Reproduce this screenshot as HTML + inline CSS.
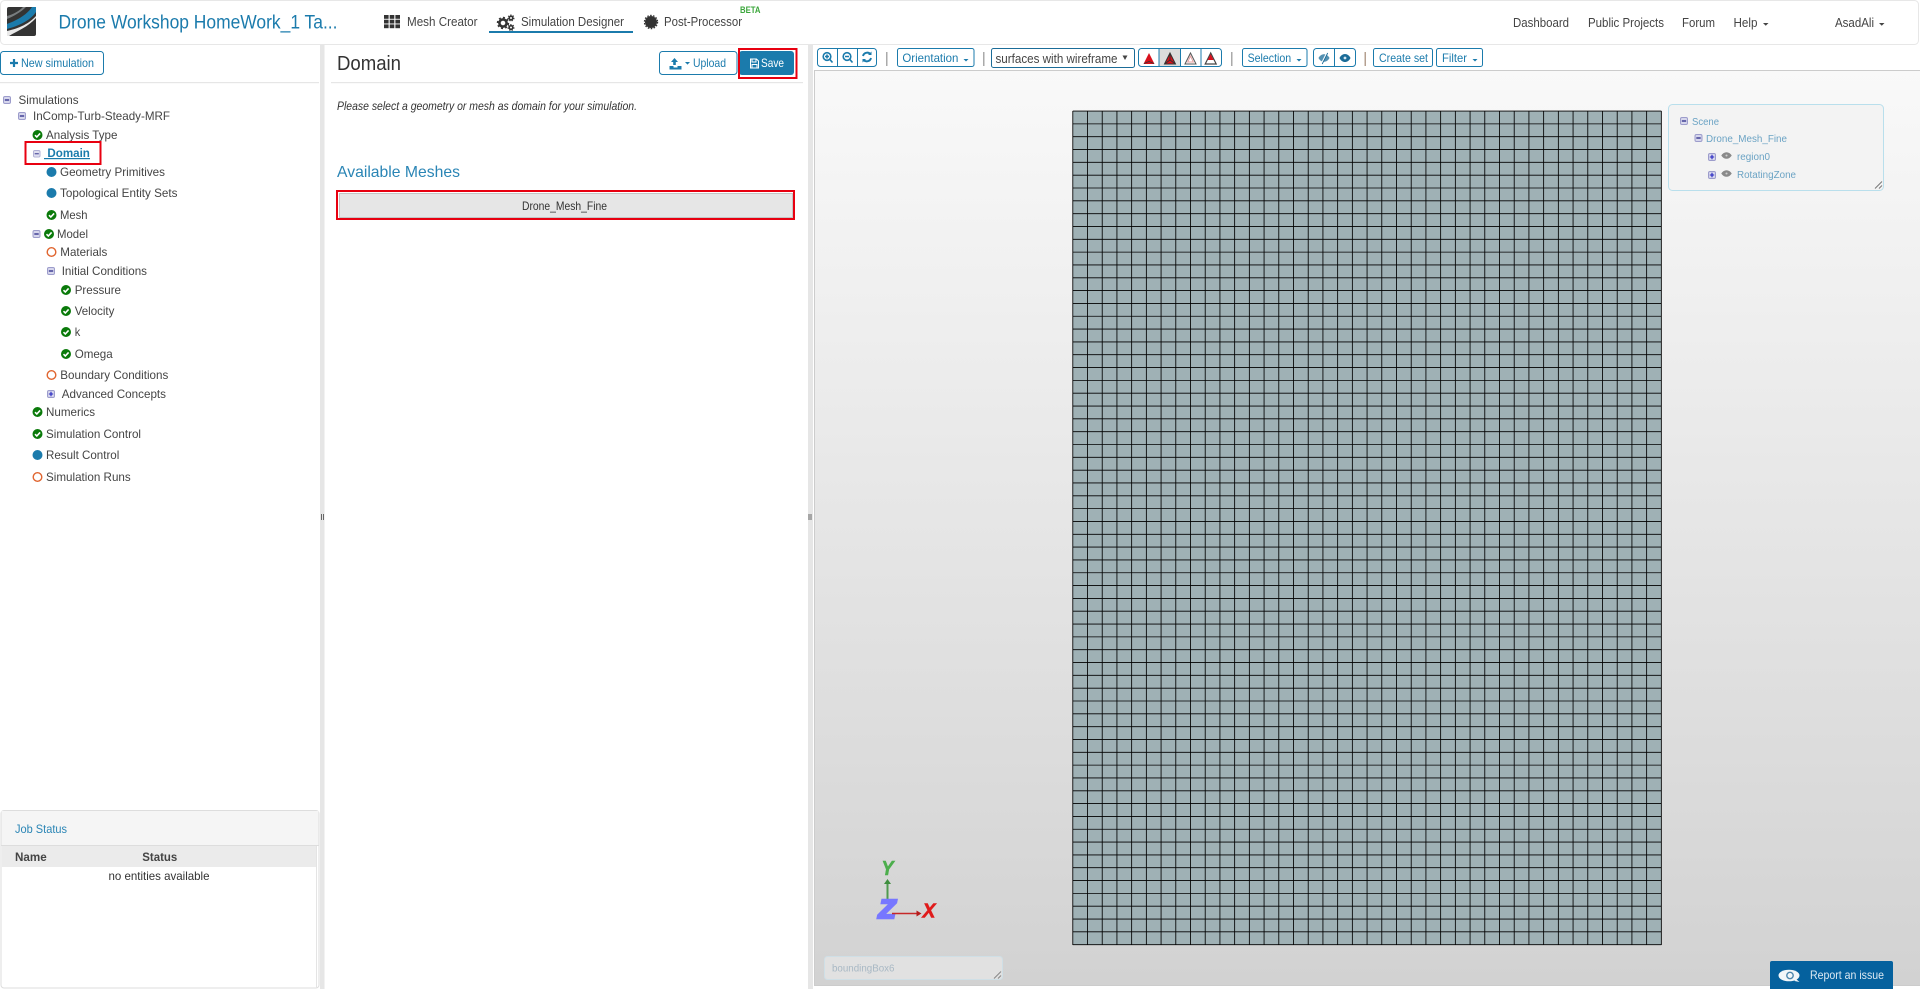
<!DOCTYPE html>
<html><head><meta charset="utf-8"><title>Domain</title>
<style>
html,body{margin:0;padding:0;background:#fff;width:1920px;height:989px;overflow:hidden}
svg{display:block;font-family:"Liberation Sans",sans-serif}
.b{fill:#1b7bac}.n{font-size:13px;fill:#444}.t{font-size:12px;fill:#444}.tb{font-size:12px;fill:#1b7bac}
.s{font-size:10px;fill:#6ba3c4}
.btn{fill:#fff;stroke:#1b7bac;stroke-width:1}
.sep{fill:#aaa}
</style></head><body>
<svg xmlns="http://www.w3.org/2000/svg" width="1920" height="989" viewBox="0 0 1920 989">
<defs>
<linearGradient id="g" x1="0" y1="0" x2="0" y2="1"><stop offset="0" stop-color="#f9f9f9"/><stop offset="1" stop-color="#d2d2d2"/></linearGradient>
<symbol id="c" viewBox="0 0 10 10"><circle cx="5" cy="5" r="5" fill="#0a7a0a"/><path d="M2.5 5.2L4.3 7L7.6 3.4" fill="none" stroke="#fff" stroke-width="1.6"/></symbol>
<symbol id="d" viewBox="0 0 10 10"><circle cx="5" cy="5" r="5" fill="#1b7bac"/></symbol>
<symbol id="o" viewBox="0 0 10 10"><circle cx="5" cy="5" r="4.3" fill="#fff" stroke="#e0652f" stroke-width="1.4"/></symbol>
<symbol id="m" viewBox="0 0 8 8"><rect x=".5" y=".5" width="7" height="7" rx="1.5" fill="#d6d6ec" stroke="#9c9ccb"/><path d="M1.8 4H6.2" stroke="#1c1c80" stroke-width="1.2"/></symbol>
<symbol id="p" viewBox="0 0 8 8"><rect x=".5" y=".5" width="7" height="7" rx="1.5" fill="#d6d6ec" stroke="#9c9ccb"/><path d="M1.8 4H6.2M4 1.8V6.2" stroke="#2222c0" stroke-width="1.1"/></symbol>
<symbol id="e" viewBox="0 0 12 8"><path d="M0 4C3-1 9-1 12 4C9 9 3 9 0 4Z" fill="#8a8a8a"/><circle cx="6" cy="4" r="1.2" fill="#cfcfcf"/></symbol>
</defs>

<!-- navbar -->
<rect x=".5" y=".5" width="1918" height="44" rx="4" fill="#fff" stroke="#e7e7e7"/>
<rect x="7" y="7" width="29" height="29" rx="2" fill="#343434"/>
<path d="M7 24C15 21 26 16 32 7H36V12C30 21 18 26 7 29Z" fill="#1b7bac"/>
<path d="M7 31C16 29 28 25 36 16V18C28 27 17 31 9 36H7Z" fill="#e9e9e9"/>
<path d="M7 19C14 16 21 12 26 7H23C19 11 14 14 7 16Z" fill="#cfd8dc" opacity=".45"/>
<text x="58.5" y="28.5" font-size="19" class="b" textLength="279" lengthAdjust="spacingAndGlyphs">Drone Workshop HomeWork_1 Ta...</text>
<g fill="#333"><rect x="384" y="15" width="4.6" height="3.8"/><rect x="389.7" y="15" width="4.6" height="3.8"/><rect x="395.4" y="15" width="4.6" height="3.8"/><rect x="384" y="19.7" width="4.6" height="3.8"/><rect x="389.7" y="19.7" width="4.6" height="3.8"/><rect x="395.4" y="19.7" width="4.6" height="3.8"/><rect x="384" y="24.4" width="4.6" height="3.8"/><rect x="389.7" y="24.4" width="4.6" height="3.8"/><rect x="395.4" y="24.4" width="4.6" height="3.8"/></g>
<text x="407" y="26" class="n" textLength="70.5" lengthAdjust="spacingAndGlyphs">Mesh Creator</text>
<g fill="none" stroke="#333"><circle cx="503" cy="23" r="3.6" stroke-width="2.6"/><circle cx="503" cy="23" r="5.4" stroke-width="1.6" stroke-dasharray="2 2.2"/><circle cx="511" cy="18" r="1.8" stroke-width="1.6"/><circle cx="511" cy="18" r="3" stroke-width="1" stroke-dasharray="1.3 1.3"/><circle cx="511" cy="27.5" r="1.8" stroke-width="1.6"/><circle cx="511" cy="27.5" r="3" stroke-width="1" stroke-dasharray="1.3 1.3"/></g>
<text x="521" y="26" class="n" textLength="103" lengthAdjust="spacingAndGlyphs">Simulation Designer</text>
<rect x="489" y="31" width="144" height="2" fill="#1b7bac"/>
<circle cx="651" cy="22" r="6" fill="#333"/><circle cx="651" cy="22" r="6.6" fill="none" stroke="#333" stroke-width="1.2" stroke-dasharray="1.6 1.4"/>
<text x="664" y="26" class="n" textLength="78" lengthAdjust="spacingAndGlyphs">Post-Processor</text>
<text x="740" y="13" font-size="9" font-weight="bold" fill="#3aa63a" textLength="20.5" lengthAdjust="spacingAndGlyphs">BETA</text>
<text x="1513" y="27" class="n" textLength="56" lengthAdjust="spacingAndGlyphs">Dashboard</text>
<text x="1588" y="27" class="n" textLength="76" lengthAdjust="spacingAndGlyphs">Public Projects</text>
<text x="1682" y="27" class="n" textLength="33" lengthAdjust="spacingAndGlyphs">Forum</text>
<text x="1733.5" y="27" class="n" textLength="24" lengthAdjust="spacingAndGlyphs">Help</text>
<path d="M1763 23h5.5l-2.75 2.8z" fill="#444"/>
<text x="1835" y="27" class="n" textLength="39" lengthAdjust="spacingAndGlyphs">AsadAli</text>
<path d="M1879 23h5.5l-2.75 2.8z" fill="#444"/>

<!-- splitters -->
<rect x="320" y="45" width="4.5" height="944" fill="#e6e6e6"/>
<rect x="808" y="45" width="5" height="944" fill="#e6e6e6"/>
<path d="M321.5 514v6M323.5 514v6M809 514v6M811 514v6" stroke="#666" stroke-width="1"/>

<!-- left panel -->
<rect x=".5" y="51.5" width="103" height="23" rx="3" class="btn"/>
<path d="M10 63h8M14 59v8" stroke="#1b7bac" stroke-width="2.2"/>
<text x="21" y="67" class="tb" textLength="73" lengthAdjust="spacingAndGlyphs">New simulation</text>
<rect x="0" y="82" width="319" height="1.2" fill="#e6e6e6"/>

<use href="#m" x="3" y="96" width="8" height="8"/><text x="18.5" y="104" class="t" textLength="60" lengthAdjust="spacingAndGlyphs">Simulations</text>
<use href="#m" x="18" y="112" width="8" height="8"/><text x="33" y="120" class="t" textLength="137" lengthAdjust="spacingAndGlyphs">InComp-Turb-Steady-MRF</text>
<use href="#c" x="32.5" y="130" width="10" height="10"/><text x="46" y="139" class="t" textLength="71.5" lengthAdjust="spacingAndGlyphs">Analysis Type</text>
<use href="#m" x="33" y="150" width="7.5" height="7.5" opacity=".8"/><text x="47.4" y="157" font-size="12" font-weight="bold" fill="#1b7bac" textLength="42.5" lengthAdjust="spacingAndGlyphs">Domain</text>
<rect x="44" y="158" width="46" height="1.2" fill="#1b7bac"/>
<rect x="25.5" y="142" width="75" height="22" fill="none" stroke="#e80010" stroke-width="2"/>
<use href="#d" x="46.5" y="167" width="10" height="10"/><text x="60" y="176" class="t" textLength="105" lengthAdjust="spacingAndGlyphs">Geometry Primitives</text>
<use href="#d" x="46.5" y="188" width="10" height="10"/><text x="60" y="197" class="t" textLength="117.5" lengthAdjust="spacingAndGlyphs">Topological Entity Sets</text>
<use href="#c" x="46.5" y="210" width="10" height="10"/><text x="60" y="219" class="t" textLength="27.5" lengthAdjust="spacingAndGlyphs">Mesh</text>
<use href="#m" x="32.5" y="230" width="8" height="8"/><use href="#c" x="44" y="229" width="10" height="10"/><text x="57" y="238" class="t" textLength="31" lengthAdjust="spacingAndGlyphs">Model</text>
<use href="#o" x="46.5" y="247" width="10" height="10"/><text x="60.3" y="256" class="t" textLength="47" lengthAdjust="spacingAndGlyphs">Materials</text>
<use href="#m" x="47" y="267" width="8" height="8"/><text x="61.7" y="275" class="t" textLength="85.3" lengthAdjust="spacingAndGlyphs">Initial Conditions</text>
<use href="#c" x="61" y="285" width="10" height="10"/><text x="74.7" y="294" class="t" textLength="46.3" lengthAdjust="spacingAndGlyphs">Pressure</text>
<use href="#c" x="61" y="306" width="10" height="10"/><text x="74.7" y="315" class="t" textLength="39.7" lengthAdjust="spacingAndGlyphs">Velocity</text>
<use href="#c" x="61" y="327" width="10" height="10"/><text x="74.7" y="336" class="t" textLength="5.5" lengthAdjust="spacingAndGlyphs">k</text>
<use href="#c" x="61" y="349" width="10" height="10"/><text x="74.7" y="358" class="t" textLength="38" lengthAdjust="spacingAndGlyphs">Omega</text>
<use href="#o" x="46.5" y="370" width="10" height="10"/><text x="60.3" y="379" class="t" textLength="108" lengthAdjust="spacingAndGlyphs">Boundary Conditions</text>
<use href="#p" x="47" y="390" width="8" height="8"/><text x="61.7" y="398" class="t" textLength="104.3" lengthAdjust="spacingAndGlyphs">Advanced Concepts</text>
<use href="#c" x="32.5" y="407" width="10" height="10"/><text x="46" y="416" class="t" textLength="49" lengthAdjust="spacingAndGlyphs">Numerics</text>
<use href="#c" x="32.5" y="429" width="10" height="10"/><text x="46" y="438" class="t" textLength="95" lengthAdjust="spacingAndGlyphs">Simulation Control</text>
<use href="#d" x="32.5" y="450" width="10" height="10"/><text x="46" y="459" class="t" textLength="73.3" lengthAdjust="spacingAndGlyphs">Result Control</text>
<use href="#o" x="32.5" y="472" width="10" height="10"/><text x="46" y="481" class="t" textLength="84.7" lengthAdjust="spacingAndGlyphs">Simulation Runs</text>

<!-- job status -->
<rect x="1" y="810.5" width="318" height="177.5" rx="3" fill="#fff" stroke="#ddd"/>
<rect x="1.5" y="811" width="317" height="34" fill="#f5f5f5"/>
<rect x="1" y="845" width="318" height="1" fill="#ddd"/>
<rect x="2" y="846" width="314" height="21" fill="#ebebeb"/>
<rect x="316" y="846" width="1" height="142" fill="#e4e4e4"/>
<text x="15" y="833" font-size="12" fill="#2a85b5" textLength="52" lengthAdjust="spacingAndGlyphs">Job Status</text>
<text x="15" y="861" font-size="12" font-weight="bold" fill="#444" textLength="31.7" lengthAdjust="spacingAndGlyphs">Name</text>
<text x="142.3" y="861" font-size="12" font-weight="bold" fill="#444" textLength="35" lengthAdjust="spacingAndGlyphs">Status</text>
<text x="108.5" y="880" font-size="12" fill="#333" textLength="101" lengthAdjust="spacingAndGlyphs">no entities available</text>

<!-- middle panel -->
<text x="337" y="70" font-size="20" fill="#333" textLength="64" lengthAdjust="spacingAndGlyphs">Domain</text>
<rect x="659.5" y="51.5" width="77.5" height="23" rx="3" class="btn"/>
<path d="M674.5 58l-3.5 4h2.2v3h2.6v-3H678zM669.5 66h4v1.5h4V66h4v3.5h-12z" fill="#1b7bac"/>
<path d="M685 62h5l-2.5 2.6z" fill="#1b7bac"/>
<text x="693" y="67" class="tb" textLength="33" lengthAdjust="spacingAndGlyphs">Upload</text>
<rect x="739" y="51" width="55" height="24" rx="3" fill="#1b7bac"/>
<path d="M750.5 59h6l2 2v7h-8zM752 59v3h4v-3M752 68v-3.5h5V68" fill="none" stroke="#fff" stroke-width="1"/>
<text x="761" y="67" font-size="12" fill="#fff" textLength="23" lengthAdjust="spacingAndGlyphs">Save</text>
<rect x="739" y="49" width="57.5" height="29" fill="none" stroke="#e80010" stroke-width="2"/>
<rect x="331" y="82" width="472" height="1.2" fill="#e6e6e6"/>
<text x="337" y="110" font-size="12" font-style="italic" fill="#333" textLength="300" lengthAdjust="spacingAndGlyphs">Please select a geometry or mesh as domain for your simulation.</text>
<text x="337" y="177" font-size="16" fill="#2a85b5" textLength="123" lengthAdjust="spacingAndGlyphs">Available Meshes</text>
<rect x="339.5" y="193.5" width="453" height="24" fill="#e6e6e6" stroke="#c4c4c4"/>
<rect x="337" y="191" width="457" height="28" fill="none" stroke="#e80010" stroke-width="2"/>
<text x="522" y="210" font-size="12" fill="#333" textLength="85" lengthAdjust="spacingAndGlyphs">Drone_Mesh_Fine</text>

<!-- canvas -->
<rect x="814.5" y="70.5" width="1106" height="915" fill="url(#g)" stroke="#ccc"/>

<!-- toolbar -->
<rect x="817.5" y="48.5" width="59" height="18" rx="3" class="btn"/><path d="M837.5 48.5v18M857.5 48.5v18" stroke="#1b7bac"/>
<g fill="none" stroke="#1b7bac" stroke-width="1.6"><circle cx="827" cy="56.5" r="3.8"/><path d="M829.7 59.3L832.5 62.5M825 56.5h4M827 54.5v4"/><circle cx="847" cy="56.5" r="3.8"/><path d="M849.7 59.3L852.5 62.5M845 56.5h4"/><path d="M863 56a4.3 4.3 0 0 1 7.5-1.8M871 58a4.3 4.3 0 0 1-7.5 1.8" stroke-width="1.9"/></g>
<path d="M871.5 51.5v3.5H868zM862.5 62.5V59H866z" fill="#1b7bac"/>
<rect x="886" y="52" width="1.5" height="14" class="sep"/>
<rect x="897.5" y="48.5" width="76.5" height="18" rx="2" class="btn"/>
<text x="902.4" y="62" class="tb" textLength="56" lengthAdjust="spacingAndGlyphs">Orientation</text><path d="M963.5 59h5l-2.5 2.5z" fill="#1b7bac"/>
<rect x="983" y="52" width="1.5" height="14" class="sep"/>
<rect x="991.5" y="48.5" width="143" height="19" rx="2" fill="#fff" stroke="#1b6c98"/>
<text x="995.5" y="63" font-size="12.5" fill="#444" textLength="122" lengthAdjust="spacingAndGlyphs">surfaces with wireframe</text><path d="M1122.5 55.5h5l-2.5 4.5z" fill="#444"/>
<rect x="1138.5" y="48.5" width="83" height="18" rx="3" class="btn"/>
<rect x="1159" y="49" width="21.5" height="17" fill="#dcdcdc"/>
<path d="M1159 48.5v18M1180.5 48.5v18M1201 48.5v18" stroke="#1b7bac"/>
<path d="M1149 53l-5.5 11h11z" fill="#d8101c"/><path d="M1144 63.5l5-2 5 2" fill="none" stroke="#333" stroke-width=".8"/>
<path d="M1170 53l-5.5 11h11z" fill="#d8101c"/><path d="M1170 53l-5.5 11h11zM1170 53v7l-5.5 4M1170 60l5.5 4" fill="none" stroke="#333" stroke-width="1"/>
<path d="M1190.5 53l-5.5 11h11z" fill="none" stroke="#555" stroke-width="1"/><path d="M1190.5 56l-2.8 6h5.6z" fill="none" stroke="#e8a0a0" stroke-width="1"/>
<path d="M1210.7 53l-5.5 11h11z" fill="none" stroke="#444" stroke-width="1.2"/><path d="M1210.7 54l-3 6h6z" fill="#d8101c"/>
<rect x="1231" y="52" width="1.5" height="14" class="sep"/>
<rect x="1242.5" y="48.5" width="64.5" height="18" rx="2" class="btn"/>
<text x="1247.6" y="62" class="tb" textLength="43.6" lengthAdjust="spacingAndGlyphs">Selection</text><path d="M1296.5 59h5l-2.5 2.5z" fill="#1b7bac"/>
<rect x="1313.5" y="48.5" width="42" height="18" rx="3" class="btn"/><path d="M1334.5 48.5v18" stroke="#1b7bac"/>
<path d="M1318.5 58c2.5-5 8.5-5 11 0c-2.5 5-8.5 5-11 0z" fill="#1b6c98" opacity=".75"/><path d="M1327 52.5l-5.5 11" stroke="#fff" stroke-width="1.3"/><path d="M1327.7 53l-5.5 11" stroke="#1b6c98" stroke-width=".9"/>
<path d="M1339.5 58c2.5-5.4 8.5-5.4 11 0c-2.5 5.4-8.5 5.4-11 0z" fill="#1b6c98"/><circle cx="1345" cy="58" r="1.4" fill="#d6e6ef"/>
<rect x="1364.5" y="52" width="1.5" height="14" fill="#b5a090"/>
<rect x="1373.5" y="48.5" width="59" height="18" rx="2" class="btn"/>
<text x="1379" y="62" class="tb" textLength="49" lengthAdjust="spacingAndGlyphs">Create set</text>
<rect x="1436.5" y="48.5" width="46" height="18" rx="2" class="btn"/>
<text x="1442" y="62" class="tb" textLength="25" lengthAdjust="spacingAndGlyphs">Filter</text><path d="M1472.5 59h5l-2.5 2.5z" fill="#1b7bac"/>

<!-- mesh grid -->
<rect x="1072.8" y="111" width="588.6" height="834" fill="#9fb1b5"/>
<path d="M1072.79 111v834
m14.714-834v834m14.714-834v834m14.714-834v834m14.714-834v834m14.714-834v834m14.714-834v834m14.714-834v834m14.714-834v834m14.714-834v834m14.714-834v834
m14.714-834v834m14.714-834v834m14.714-834v834m14.714-834v834m14.714-834v834m14.714-834v834m14.714-834v834m14.714-834v834m14.714-834v834m14.714-834v834
m14.714-834v834m14.714-834v834m14.714-834v834m14.714-834v834m14.714-834v834m14.714-834v834m14.714-834v834m14.714-834v834m14.714-834v834m14.714-834v834
m14.714-834v834m14.714-834v834m14.714-834v834m14.714-834v834m14.714-834v834m14.714-834v834m14.714-834v834m14.714-834v834m14.714-834v834m14.714-834v834" fill="none" stroke="#000" stroke-width=".85"/>
<path d="M1072.79 111.05h588.56
m-588.56 12.825h588.56m-588.56 12.825h588.56m-588.56 12.825h588.56m-588.56 12.825h588.56m-588.56 12.825h588.56m-588.56 12.825h588.56m-588.56 12.825h588.56m-588.56 12.825h588.56m-588.56 12.825h588.56m-588.56 12.825h588.56
m-588.56 12.825h588.56m-588.56 12.825h588.56m-588.56 12.825h588.56m-588.56 12.825h588.56m-588.56 12.825h588.56m-588.56 12.825h588.56m-588.56 12.825h588.56m-588.56 12.825h588.56m-588.56 12.825h588.56m-588.56 12.825h588.56
m-588.56 12.825h588.56m-588.56 12.825h588.56m-588.56 12.825h588.56m-588.56 12.825h588.56m-588.56 12.825h588.56m-588.56 12.825h588.56m-588.56 12.825h588.56m-588.56 12.825h588.56m-588.56 12.825h588.56m-588.56 12.825h588.56
m-588.56 12.825h588.56m-588.56 12.825h588.56m-588.56 12.825h588.56m-588.56 12.825h588.56m-588.56 12.825h588.56m-588.56 12.825h588.56m-588.56 12.825h588.56m-588.56 12.825h588.56m-588.56 12.825h588.56m-588.56 12.825h588.56
m-588.56 12.825h588.56m-588.56 12.825h588.56m-588.56 12.825h588.56m-588.56 12.825h588.56m-588.56 12.825h588.56m-588.56 12.825h588.56m-588.56 12.825h588.56m-588.56 12.825h588.56m-588.56 12.825h588.56m-588.56 12.825h588.56
m-588.56 12.825h588.56m-588.56 12.825h588.56m-588.56 12.825h588.56m-588.56 12.825h588.56m-588.56 12.825h588.56m-588.56 12.825h588.56m-588.56 12.825h588.56m-588.56 12.825h588.56m-588.56 12.825h588.56m-588.56 12.825h588.56
m-588.56 12.825h588.56m-588.56 12.825h588.56m-588.56 12.825h588.56m-588.56 12.825h588.56m-588.56 12.825h588.56" fill="none" stroke="#000" stroke-width=".85"/>

<!-- scene panel -->
<rect x="1668.5" y="104.5" width="215" height="86" rx="4" fill="#f3f3f3" stroke="#b9dfec"/>
<use href="#m" x="1680" y="117" width="8" height="8"/><text x="1692" y="125" class="s" textLength="27" lengthAdjust="spacingAndGlyphs">Scene</text>
<use href="#m" x="1694.5" y="134" width="8" height="8"/><text x="1706" y="142" class="s" textLength="81" lengthAdjust="spacingAndGlyphs">Drone_Mesh_Fine</text>
<use href="#p" x="1708" y="153" width="8" height="8"/><use href="#e" x="1721" y="152" width="11" height="7"/><text x="1737" y="160" class="s" textLength="33" lengthAdjust="spacingAndGlyphs">region0</text>
<use href="#p" x="1708" y="171" width="8" height="8"/><use href="#e" x="1721" y="170" width="11" height="7"/><text x="1737" y="178" class="s" textLength="59" lengthAdjust="spacingAndGlyphs">RotatingZone</text>
<path d="M1875 188.5l7-7M1879 188.5l3-3" stroke="#777" stroke-width="1"/>

<!-- axes -->
<path d="M887.5 900V884" stroke="#4f9a4f" stroke-width="2"/><path d="M887.5 879l-3.5 5h7z" fill="#3e8e3e"/>
<text x="881.5" y="875" font-size="20" font-weight="bold" font-style="italic" fill="#4cae4c" stroke="#4cae4c" stroke-width=".6" textLength="12" lengthAdjust="spacingAndGlyphs">Y</text>
<text x="922.5" y="917.5" font-size="20" font-weight="bold" font-style="italic" fill="#e01b1b" stroke="#e01b1b" stroke-width=".6" textLength="13" lengthAdjust="spacingAndGlyphs">X</text>
<text x="878.5" y="918" font-size="26" font-weight="bold" font-style="italic" fill="#7777ff" stroke="#7777ff" stroke-width="2.5" textLength="17" lengthAdjust="spacingAndGlyphs">Z</text>
<path d="M892 913.5h26" stroke="#c62828" stroke-width="1.6"/><path d="M921.5 913.5l-5-3v6z" fill="#b51c1c"/>

<!-- bounding box -->
<rect x="824.5" y="956.5" width="178" height="23" rx="3" fill="#e1e1e1" stroke="#cfdfe6"/>
<text x="832" y="971.5" font-size="10" fill="#a8b8c4" textLength="62.5" lengthAdjust="spacingAndGlyphs">boundingBox6</text>
<path d="M994 978.5l7-7M998 978.5l3-3" stroke="#888" stroke-width="1"/>

<!-- report -->
<path d="M1770 989V963a2 2 0 0 1 2-2h119a2 2 0 0 1 2 2v26z" fill="#05619e"/>
<ellipse cx="1789" cy="975.5" rx="10.5" ry="5.8" fill="#f2f6f9"/><path d="M1796 979l3.5 3-5-1z" fill="#f2f6f9"/>
<circle cx="1790" cy="975.5" r="3.2" fill="none" stroke="#4d86ad" stroke-width="1.4"/>
<text x="1810" y="979" font-size="12" fill="#dce9f2" textLength="74" lengthAdjust="spacingAndGlyphs">Report an issue</text>
</svg>
</body></html>
